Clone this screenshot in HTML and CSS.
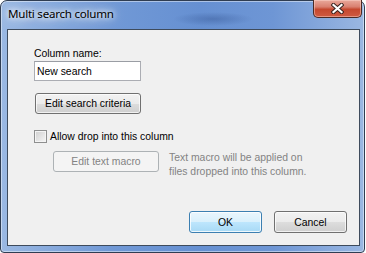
FILE: index.html
```html
<!DOCTYPE html>
<html lang="en">
<head>
    <meta charset="UTF-8">
    <title>Multi search column</title>
    <link rel="stylesheet" href="styles.css">
</head>
<body>
    <div class="window">
        <div class="titlebar">
            <span class="title">Multi search column</span>
            <button class="close" title="Close">
                <svg width="13" height="11" viewBox="0 0 13 11">
                    <path d="M2.5 2 L10.5 9 M10.5 2 L2.5 9" stroke="#3a2420" stroke-width="4.2" stroke-linecap="square"/>
                    <path d="M2.5 2 L10.5 9 M10.5 2 L2.5 9" stroke="#fff" stroke-width="2.2" stroke-linecap="square"/>
                </svg>
            </button>
        </div>

        <div class="client">
            <!-- Column name -->
            <div class="label">Column name:</div>
            <input type="text" class="field" value="New search">
            <button class="btn btn-criteria">Edit search criteria</button>

            <!-- Drop options -->
            <label class="check-row">
                <span class="checkbox"></span>
                <span>Allow drop into this column</span>
            </label>
            <div class="macro-row">
                <button class="btn btn-macro" disabled>Edit text macro</button>
                <div class="hint">Text macro will be applied on<br>files dropped into this column.</div>
            </div>

            <div class="actions">
                <button class="btn btn-default">OK</button>
                <button class="btn btn-action">Cancel</button>
            </div>
        </div>
    </div>
</body>
</html>
```

FILE: styles.css
```css
/* Reset */
* {
    box-sizing: border-box;
}

body {
    margin: 0;
    background: #fff;
    font-family: "Liberation Sans", Arial, sans-serif;
    font-size: 10.4px;
    color: #000;
}

/* Window frame */
.window {
    width: 365px;
    height: 253px;
    border: 1px solid #2f3d52;
    border-radius: 7px 7px 4px 4px;
    padding: 0 4px 6px 6px;
    display: flex;
    flex-direction: column;
    background:
        radial-gradient(ellipse 40px 7px at 212px 18px, rgba(40, 70, 130, 0.35), transparent),
        linear-gradient(to right, #9ab8e2 0%, #7199d6 30%, #6690d2 55%, #6e96d5 75%, #9ab7e2 100%);
    box-shadow: inset 0 0 0 1px rgba(255, 255, 255, 0.45);
}

/* Title bar */
.titlebar {
    height: 28px;
    display: flex;
    justify-content: space-between;
    align-items: flex-start;
}

.title {
    font-family: "Noto Sans", sans-serif;
    font-size: 11.6px;
    letter-spacing: -0.25px;
    line-height: 16px;
    margin: 5px 0 0 1px;
    text-shadow: 0 0 5px #fff, 0 0 9px #fff, 0 0 14px #e4edf8;
}

.close {
    width: 49px;
    height: 18px;
    margin: -1px -2px 0 0;
    padding: 0;
    display: flex;
    align-items: center;
    justify-content: center;
    border: 1px solid #4a2a26;
    border-top: none;
    border-radius: 0 0 5px 5px;
    background: linear-gradient(#e9a99c 0%, #d98070 40%, #c5482f 55%, #cf5a42 100%);
    box-shadow: inset 0 0 0 1px rgba(255, 220, 210, 0.45);
}

/* Client area */
.client {
    flex: 1;
    background: #f0f0f0;
    border: 1px solid #3e4b5c;
    padding: 17px 12px 12px 26px;
    display: flex;
    flex-direction: column;
    align-items: flex-start;
}

.label {
    line-height: 13px;
    margin-bottom: 1px;
}

.field {
    width: 107px;
    height: 20px;
    border: 1px solid #abadb3;
    border-top-color: #9a9da4;
    background: #fff;
    padding: 0 2px;
    font: inherit;
    outline: none;
}

/* Buttons */
.btn {
    height: 21px;
    padding: 0;
    border: 1px solid #707070;
    border-radius: 3px;
    background: linear-gradient(#f2f2f2 0%, #ebebeb 50%, #dddddd 50%, #cfcfcf 100%);
    box-shadow: inset 0 0 0 1px rgba(255, 255, 255, 0.7);
    font: inherit;
    color: #000;
}

.btn-criteria {
    width: 106px;
    margin: 12px 0 0 1px;
}

.btn-macro {
    width: 106px;
}

.btn:disabled {
    border-color: #adb2b5;
    background: #f4f4f4;
    box-shadow: none;
    color: #838383;
}

.btn-default,
.btn-action {
    width: 73px;
    height: 22px;
}

.btn-default {
    border-color: #3c7fb1;
    background: linear-gradient(#eaf6fd 0%, #d9f0fc 50%, #bee6fd 50%, #a7d9f5 100%);
    box-shadow: inset 0 0 0 1px rgba(255, 255, 255, 0.8);
}

/* Checkbox */
.check-row {
    margin-top: 16px;
    display: flex;
    align-items: center;
    gap: 3px;
    line-height: 13px;
}

.checkbox {
    width: 13px;
    height: 13px;
    border: 1px solid #8e8f8f;
    background: linear-gradient(135deg, #cfcfcf, #f6f6f6);
    box-shadow: inset 0 0 0 1px #f4f4f4;
}

/* Text macro */
.macro-row {
    margin-top: 8px;
    padding-left: 19px;
    display: flex;
    gap: 10px;
    align-items: flex-start;
}

.hint {
    line-height: 14px;
    color: #838383;
    white-space: nowrap;
}

/* Dialog buttons */
.actions {
    margin-top: auto;
    align-self: stretch;
    display: flex;
    justify-content: flex-end;
    gap: 12px;
}
```
